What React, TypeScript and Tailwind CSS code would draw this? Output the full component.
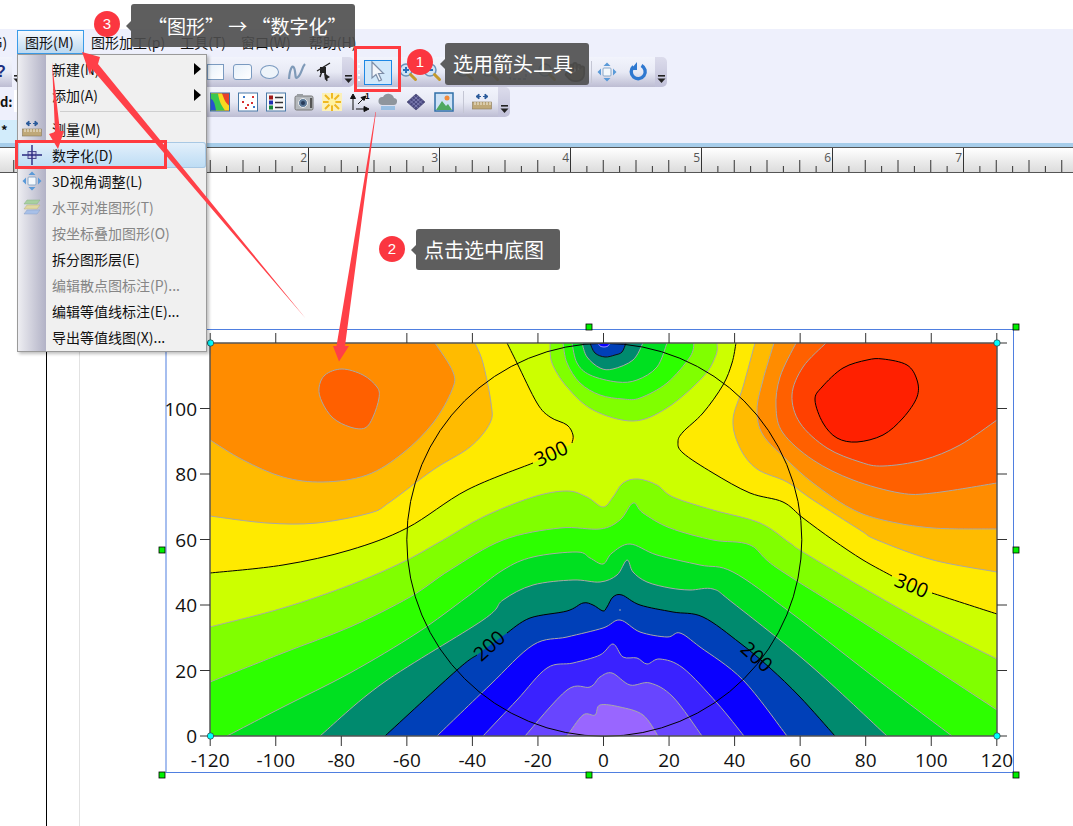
import React from 'react'
import { Hand } from 'lucide-react'

type Pt = [number, number]

interface ILayer {
  color: string
  pts: Pt[]
  close?: Pt[]
  line?: string
  gap?: number
}

// plot corners, page coordinates
const TL: Pt = [210, 343]
const TR: Pt = [997, 343]
const BL: Pt = [210, 736]
const BR: Pt = [997, 736]

const smooth = (pts: Pt[], closed = false) => {
  const at = (i: number) =>
    closed ? pts[(i + pts.length) % pts.length] : pts[Math.max(0, Math.min(pts.length - 1, i))]
  let d = `M${pts[0][0]} ${pts[0][1]}`
  const n = closed ? pts.length : pts.length - 1
  for (let i = 0; i < n; i++) {
    const [p0, p1, p2, p3] = [at(i - 1), at(i), at(i + 1), at(i + 2)]
    const c1 = [p1[0] + (p2[0] - p0[0]) / 6, p1[1] + (p2[1] - p0[1]) / 6]
    const c2 = [p2[0] - (p3[0] - p1[0]) / 6, p2[1] - (p3[1] - p1[1]) / 6]
    d += ` C${c1[0].toFixed(1)} ${c1[1].toFixed(1)} ${c2[0].toFixed(1)} ${c2[1].toFixed(1)} ${p2[0]} ${p2[1]}`
  }
  return closed ? d + ' Z' : d
}

const layers: ILayer[] = [
  // left high
  {
    color: '#ffea00', line: '#000', gap: 5, close: [TL],
    pts: [[210, 573], [283, 565], [350, 550], [407, 528], [467, 490], [533, 463], [572, 443], [573, 435], [567, 425], [550, 417], [537, 403], [517, 363], [507, 343]],
  },
  {
    color: '#ffbb00', close: [TL],
    pts: [[210, 516], [267, 523], [317, 523], [370, 513], [390, 502], [433, 470], [470, 447], [490, 423], [491, 403], [483, 363], [475, 343]],
  },
  {
    color: '#ff8c00', close: [TL],
    pts: [[210, 440], [243, 460], [283, 477], [323, 482], [367, 475], [403, 453], [433, 423], [452, 390], [453, 372], [435, 343]],
  },
  // right high
  {
    color: '#ffea00', line: '#000', gap: 13, close: [TR],
    pts: [[736, 343], [732, 363], [723, 385], [703, 413], [683, 432], [678, 442], [683, 453], [713, 473], [750, 493], [783, 502], [803, 518], [833, 540], [863, 560], [892, 576], [932, 593], [997, 614]],
  },
  {
    color: '#ffbb00', close: [TR],
    pts: [[755, 343], [743, 387], [733, 420], [740, 448], [757, 469], [787, 482], [813, 500], [860, 530], [877, 540], [933, 560], [997, 572]],
  },
  {
    color: '#ff8c00', close: [TR],
    pts: [[774, 343], [763, 380], [757, 410], [763, 435], [787, 460], [813, 483], [850, 508], [883, 520], [933, 528], [997, 529]],
  },
  {
    color: '#ff6000', close: [TR],
    pts: [[796, 343], [780, 377], [776, 407], [783, 433], [813, 460], [853, 480], [900, 493], [933, 493], [997, 483]],
  },
  {
    color: '#ff4000', close: [TR],
    pts: [[826, 343], [803, 367], [792, 395], [800, 423], [827, 448], [860, 462], [883, 466], [923, 460], [960, 445], [997, 420]],
  },
  // top centre low
  {
    color: '#80ff00',
    pts: [[550, 343], [552, 363], [567, 387], [593, 410], [633, 421], [667, 408], [703, 377], [716, 355], [717, 343]],
  },
  {
    color: '#2dff00',
    pts: [[563, 343], [567, 363], [580, 383], [600, 395], [623, 399], [640, 398], [667, 383], [690, 357], [694, 343]],
  },
  {
    color: '#00e020',
    pts: [[572, 343], [577, 363], [590, 375], [617, 382], [637, 380], [657, 367], [667, 343]],
  },
  {
    color: '#008a6e',
    pts: [[582, 343], [587, 357], [600, 368], [613, 369], [633, 360], [643, 343]],
  },
  {
    color: '#0040b8', line: '#111',
    pts: [[590, 343], [595, 353], [605, 357], [615, 355], [622, 352], [626, 343]],
  },
  {
    color: '#0a00ff', line: '#9a90ff',
    pts: [[598, 343], [600, 346], [604, 347], [608, 346], [610, 343]],
  },
  // bottom centre low
  {
    color: '#80ff00', close: [BR, BL],
    pts: [[210, 627], [283, 608], [350, 585], [403, 562], [443, 540], [483, 517], [533, 497], [567, 491], [587, 497], [603, 507], [613, 497], [623, 483], [638, 479], [657, 485], [673, 497], [713, 510], [760, 523], [790, 543], [803, 552], [867, 590], [933, 627], [997, 659]],
  },
  {
    color: '#2dff00', close: [BR, BL],
    pts: [[210, 682], [283, 653], [350, 627], [410, 597], [450, 570], [503, 540], [560, 528], [600, 529], [620, 520], [633, 503], [643, 513], [670, 528], [713, 540], [750, 545], [777, 568], [867, 625], [997, 710]],
  },
  {
    color: '#00e020', close: [BR, BL],
    pts: [[227, 736], [283, 707], [350, 673], [417, 633], [467, 597], [503, 570], [533, 557], [577, 552], [590, 558], [603, 564], [612, 553], [630, 544], [657, 555], [700, 565], [733, 572], [790, 612], [870, 674], [952, 736]],
  },
  {
    color: '#008a6e', close: [BR, BL],
    pts: [[320, 736], [383, 683], [483, 620], [503, 600], [533, 585], [573, 580], [600, 582], [617, 575], [627, 560], [633, 572], [647, 582], [670, 588], [690, 590], [713, 589], [733, 603], [810, 665], [887, 736]],
  },
  {
    color: '#0040b8', line: '#000', gap: 2, close: [BR, BL],
    pts: [[385, 736], [457, 670], [477, 655], [507, 633], [530, 618], [567, 611], [583, 603], [593, 605], [603, 611], [607, 607], [613, 597], [622, 595], [640, 605], [673, 612], [703, 617], [740, 643], [770, 668], [800, 697], [835, 736]],
  },
  {
    color: '#0a00ff', close: [BR, BL],
    pts: [[437, 736], [490, 685], [533, 645], [567, 637], [603, 628], [620, 620], [640, 632], [667, 637], [680, 633], [700, 647], [743, 680], [787, 736]],
  },
  {
    color: '#3a22ff', close: [BR, BL],
    pts: [[483, 736], [517, 700], [547, 668], [573, 663], [600, 655], [613, 644], [623, 657], [637, 658], [647, 664], [660, 659], [683, 668], [717, 703], [744, 736]],
  },
  {
    color: '#6845ff', close: [BR, BL],
    pts: [[525, 736], [567, 690], [590, 687], [600, 677], [612, 673], [630, 685], [650, 683], [673, 697], [702, 736]],
  },
  {
    color: '#9966ff', close: [BR, BL],
    pts: [[567, 736], [583, 715], [595, 715], [600, 705], [620, 707], [643, 715], [658, 736]],
  },
]

const blobLeft: Pt[] = [[342, 369], [363, 375], [377, 387], [379, 398], [373, 417], [365, 428], [350, 427], [333, 418], [322, 402], [319, 388], [325, 375]]
const blobRight: Pt[] = [[883, 359], [907, 365], [917, 380], [917, 397], [903, 418], [883, 435], [857, 442], [837, 438], [823, 423], [815, 400], [822, 387], [843, 368], [867, 360]]

const xTicks = [-120, -100, -80, -60, -40, -20, 0, 20, 40, 60, 80, 100, 120]
const yTicks = [0, 20, 40, 60, 80, 100, 120]
const tickX = (v: number) => 603.5 + (v / 120) * 393.3
const tickY = (v: number) => 736 - (v / 120) * 393

const handles: Pt[] = [[162, 327], [589, 327], [1016, 327], [162, 550], [1016, 550], [162, 775], [589, 775], [1016, 775]]
const anchors: Pt[] = [[210.5, 343], [997, 343], [210.5, 736], [997, 736]]

function Chart() {
  return (
    <svg
      className="absolute left-0 top-0"
      width={1073}
      height={653}
      viewBox="0 173 1073 653"
      fontFamily="'Open Sans', sans-serif"
    >
      <line x1={46.5} y1={173} x2={46.5} y2={826} stroke="#000" />
      <line x1={79.5} y1={173} x2={79.5} y2={826} stroke="#e2e2e2" />
      <rect x={166} y={329.5} width={847.5} height={443} fill="none" stroke="#4f7fe0" />

      <clipPath id="plot">
        <rect x={210} y={343} width={787} height={393} />
      </clipPath>
      <g clipPath="url(#plot)">
        <rect x={210} y={343} width={787} height={393} fill="#ccff00" />
        {layers.map((l, i) => {
          const close = (l.close ?? []).map((c) => `L${c[0]} ${c[1]}`).join(' ')
          const strokes = l.gap ? [l.pts.slice(0, l.gap + 1), l.pts.slice(l.gap + 1)] : [l.pts]
          return (
            <g key={i}>
              <path d={`${smooth(l.pts)} ${close} Z`} fill={l.color} />
              {strokes.map((s, j) => (
                <path key={j} d={smooth(s)} fill="none" stroke={l.line ?? '#a8a8a8'} strokeWidth={1} />
              ))}
            </g>
          )
        })}
        <path d={smooth(blobLeft, true)} fill="#ff6000" stroke="#a8a8a8" />
        <path d={smooth(blobRight, true)} fill="#ff2000" stroke="#000" />
        <circle cx={620} cy={610} r={0.8} fill="#b0b0b0" />
      </g>

      <ellipse cx={604.3} cy={539.8} rx={197.5} ry={196.5} fill="none" stroke="#000" />

      <rect x={210} y={343} width={787} height={393} fill="none" stroke="#555" strokeWidth={1.5} />
      {xTicks.map((v) => (
        <g key={v} stroke="#333">
          <line x1={tickX(v)} y1={333} x2={tickX(v)} y2={343} />
          <line x1={tickX(v)} y1={736} x2={tickX(v)} y2={746} />
        </g>
      ))}
      {yTicks.map((v) => (
        <g key={v} stroke="#333">
          <line x1={200} y1={tickY(v)} x2={210} y2={tickY(v)} />
          <line x1={997} y1={tickY(v)} x2={1007} y2={tickY(v)} />
        </g>
      ))}
      {xTicks.map((v) => (
        <text key={v} x={tickX(v)} y={767} fontSize={19} textAnchor="middle" fill="#111">
          {v}
        </text>
      ))}
      {yTicks.filter((v) => v < 120).map((v) => (
        <text key={v} x={197} y={tickY(v) + 7} fontSize={19} textAnchor="end" fill="#111">
          {v}
        </text>
      ))}

      <g fontSize={20} fill="#000" textAnchor="middle">
        <text transform="translate(554 460) rotate(-25)">300</text>
        <text transform="translate(909 592) rotate(22)">300</text>
        <text transform="translate(494 651) rotate(-42)">200</text>
        <text transform="translate(752 662) rotate(42)">200</text>
      </g>

      {handles.map(([x, y]) => (
        <rect key={`${x}-${y}`} x={x - 3} y={y - 3} width={6} height={6} fill="#00f000" stroke="#000" strokeWidth={0.8} />
      ))}
      {anchors.map(([x, y]) => (
        <circle key={`${x}-${y}`} cx={x} cy={y} r={3.2} fill="#00ffff" stroke="#333" strokeWidth={0.7} />
      ))}
    </svg>
  )
}

function Ruler() {
  const ticks = Array.from({ length: 70 }, (_, i) => i - 3)
  return (
    <div className="h-[26px] shrink-0 border-y border-[#555] bg-linear-to-b from-white to-[#dcdcdc]">
      <svg width={1073} height={24} fontFamily="'Open Sans', sans-serif">
        {ticks.map((i) => {
          const x = 46.5 + i * 16.375
          const h = i % 8 === 0 ? 24 : i % 2 === 0 ? 12 : 6
          return <line key={i} x1={x} y1={24 - h} x2={x} y2={24} stroke="#333" />
        })}
        {[1, 2, 3, 4, 5, 6, 7].map((n) => (
          <text key={n} x={45 + n * 131} y={14} fontSize={12} textAnchor="end" fill="#555">
            {n}
          </text>
        ))}
      </svg>
    </div>
  )
}

const Chevron = () => (
  <svg width={9} height={10} viewBox="0 0 9 10">
    <rect x={1} y={1} width={7} height={1.6} fill="#222" />
    <path d="M0.5 4.5h8L4.5 9z" fill="#222" />
  </svg>
)

const Cap = () => (
  <div className="flex h-full w-[12px] items-end justify-center rounded-r-[5px] bg-linear-to-b from-[#dcdcec] to-[#c0c0d8] pb-[3px]">
    <Chevron />
  </div>
)

const Sep = () => <div className="h-[22px] w-px bg-[#c4c6d4]" />

const Shape = ({ children }: { children: React.ReactNode }) => (
  <svg width={20} height={20} viewBox="0 0 20 20">
    {children}
  </svg>
)

const Magnifier = ({ sign }: { sign?: string }) => (
  <Shape>
    <circle cx={8} cy={8} r={6} fill="#cfe4f6" stroke="#6a93bb" strokeWidth={1.5} />
    {sign && <path d={sign === '+' ? 'M5 8h6M8 5v6' : 'M5 8h6'} stroke="#2a70b8" strokeWidth={2} />}
    <path d="M12.5 12.5l5 5" stroke="#c49a2a" strokeWidth={3} strokeLinecap="round" />
  </Shape>
)

const RulerIcon = () => (
  <Shape>
    <path d="M9 4.5H4M4 4.5l3-2.5v5zM11 4.5h5M16 4.5l-3-2.5v5z" fill="#2a5a9a" stroke="#2a5a9a" />
    <rect x={0.5} y={10} width={19} height={7} fill="#bfa878" stroke="#8a7a58" strokeWidth={0.6} />
    <path d="M3 10v3M6 10v3M9 10v3M12 10v3M15 10v3M18 10v3" stroke="#f4efe0" />
  </Shape>
)

const View3D = () => (
  <Shape>
    <rect x={6} y={6} width={8} height={8} rx={1} fill="#f4f8fc" stroke="#8aa8c8" />
    <path d="M10 0.5l3.5 3.5h-7zM10 19.5l3.5-3.5h-7zM0.5 10l3.5-3.5v7zM19.5 10l-3.5-3.5v7z" fill="#5a9ad8" />
  </Shape>
)

const Cross = () => (
  <Shape>
    <path d="M0 10h20M10 0v20" stroke="#2a2a80" strokeWidth={1.4} />
    <rect x={6} y={6.5} width={8} height={7} fill="#c8c8e8" stroke="#4a4a90" strokeWidth={1} />
    <path d="M6 10h8M10 6.500v7" stroke="#2a2a80" strokeWidth={1.4} />
  </Shape>
)

const Layers = () => (
  <Shape>
    <path d="M5 3h13l-3 4H2z" fill="#a8d0a0" stroke="#8ab088" strokeWidth={0.5} />
    <path d="M5 8h13l-3 4H2z" fill="#e0d8a0" stroke="#b8b088" strokeWidth={0.5} />
    <path d="M5 13h13l-3 4H2z" fill="#a8c0e8" stroke="#88a0c8" strokeWidth={0.5} />
  </Shape>
)

const ContourIcon = () => (
  <Shape>
    <rect x={0.5} y={1} width={19} height={18} fill="#e8402a" stroke="#3a6ea5" />
    <path d="M1 1.500h11c2 5 3 9 7 12V18.500H1z" fill="#f8d820" />
    <path d="M1 1.500h7c1 6 2 10 7 17H1z" fill="#38c850" />
    <path d="M1 7c3 1 4 6 5 11.500H1z" fill="#2850d0" />
  </Shape>
)

const ScatterIcon = () => (
  <Shape>
    <rect x={0.5} y={1} width={19} height={18} fill="#fff" stroke="#4a7aa8" />
    <path d="M4 9h2v2H4zM9 12h2v2H9zM13 10h2v2h-2zM7 15h2v2H7zM14 4h2v2h-2z" fill="#d83030" />
    <path d="M5 4h2v2H5zM15 14h2v2h-2z" fill="#3a78c8" />
  </Shape>
)

const LegendIcon = () => (
  <Shape>
    <rect x={0.5} y={1} width={19} height={18} fill="#f8f8f8" stroke="#4a7aa8" />
    <rect x={3} y={3.5} width={4} height={4} fill="#a01818" />
    <rect x={3} y={8.5} width={4} height={4} fill="#2030b0" />
    <rect x={3} y={13.5} width={4} height={4} fill="#188838" />
    <path d="M9 5.500h8M9 10.500h8M9 15.500h8" stroke="#333" strokeWidth={1.5} />
  </Shape>
)

const CameraIcon = () => (
  <Shape>
    <rect x={1} y={4} width={18} height={14} rx={1.5} fill="#b4b8bc" stroke="#777" />
    <rect x={3} y={2} width={6} height={3} fill="#9a9ea2" />
    <circle cx={9} cy={11} r={4.5} fill="#5a7898" stroke="#eee" />
    <circle cx={9} cy={11} r={2} fill="#263a58" />
    <rect x={16} y={6} width={2} height={10} fill="#555" />
  </Shape>
)

const SunIcon = () => (
  <Shape>
    <rect x={0} y={1} width={20} height={18} fill="#fbf0b8" />
    <path d="M10 1v18M1 10h18M3 3l14 14M17 3L3 17" stroke="#efb820" strokeWidth={2} />
    <circle cx={10} cy={10} r={3.5} fill="#fff2a0" />
  </Shape>
)

const AxisIcon = () => (
  <Shape>
    <path d="M3 18V6M3 2l2.500 4.500h-5zM6 17h9M19 17l-5 2.500v-5zM8 12l5-5M16 4l-5 1.500 3 3z" stroke="#111" fill="#111" strokeWidth={1} />
    <text x={15} y={7} fontSize={8} fontWeight={700} fill="#111">1</text>
  </Shape>
)

const CloudIcon = () => (
  <Shape>
    <path d="M4 13a4 4 0 011-8 6 6 0 0111 1 3.500 3.500 0 01-1 7z" fill="#8f959c" />
    <path d="M3 14h14v4H3z" fill="#8ab8e0" opacity={0.8} />
  </Shape>
)

const DiamondIcon = () => (
  <Shape>
    <path d="M10 2l9 8-9 8-9-8z" fill="#4a4a80" stroke="#33335c" strokeWidth={0.5} />
    <path d="M5.500 6l9 8M7.700 4l9 8M3.300 8l9 8M14.500 6l-9 8M12.300 4l-9 8M16.700 8l-9 8" stroke="#8c8cc0" strokeWidth={0.7} />
  </Shape>
)

const PictureIcon = () => (
  <Shape>
    <rect x={1} y={1} width={18} height={18} fill="#cde2f6" stroke="#2f6fa8" strokeWidth={1.5} />
    <circle cx={13} cy={6} r={2.5} fill="#f08a3c" />
    <path d="M2 18l6-9 4 5 2-2 4 6z" fill="#4ea860" />
  </Shape>
)

const UndoIcon = () => (
  <svg width={20} height={20} viewBox="0 0 20 20">
    <path d="M13.500 3.500a7 7 0 11-8 1" fill="none" stroke="#2e78d0" strokeWidth={3.4} />
    <path d="M9 0v8H2.500z" fill="#2e78d0" />
  </svg>
)

const Cursor = () => (
  <svg width={18} height={22} viewBox="0 0 18 22">
    <path d="M3 1l11.500 11.500H9.500l3 6.500-2.500 1-3-6.500L3 17z" fill="#f4f6fa" stroke="#7d8ea8" strokeWidth={1.2} />
  </svg>
)

const barFill = 'bg-linear-to-b from-[#f2f4fc] via-[#e8eaf5] to-[#bdbdd3]'

function ToolbarOne() {
  return (
    <div className="flex h-[30px] shrink-0">
      <div className={`flex h-full w-[12px] items-center overflow-hidden ${barFill}`}>
        <span className="-ml-[4px] font-['Liberation_Sans',sans-serif] text-[16px] leading-none font-bold text-[#1c2f80]">?</span>
      </div>
      <div className="flex items-end pb-[3px] pl-[1px]">
        <Chevron />
      </div>
      <div className={`ml-[9px] flex h-full w-[311px] items-center justify-end pr-[5px] ${barFill}`}>
        <div className="flex w-[27px] justify-center"><div className="h-[16px] w-[17px] border border-[#7a9ac0] bg-linear-to-br from-[#e6f0fa] to-white" /></div>
        <div className="flex w-[27px] justify-center"><div className="h-[16px] w-[19px] rounded-[3px] border border-[#7a9ac0] bg-linear-to-br from-[#e6f0fa] to-white" /></div>
        <div className="flex w-[27px] justify-center"><div className="h-[14px] w-[19px] rounded-[50%] border border-[#7a9ac0] bg-[#eef4fa]" /></div>
        <div className="flex w-[27px] justify-center">
          <Shape>
            <path d="M2 17C3 5 6 2 7.500 7s0 11 3.500 8 4-10 7-13" fill="none" stroke="#7f9ab8" strokeWidth={2.2} />
          </Shape>
        </div>
        <div className="flex w-[27px] justify-center">
          <Shape>
            <path d="M3 9l13-8M9 6L6 15M10 6l3 13" stroke="#222" strokeWidth={1.4} fill="none" />
            <path d="M6 5h6v6H6zM10 11l6 4-5 3z" fill="#222" />
          </Shape>
        </div>
      </div>
      <Cap />
      <div className={`flex h-full w-[301px] items-center ${barFill}`}>
        <div className="flex h-[18px] w-[10px] flex-col items-center justify-between">
          <i className="size-[2px] bg-white" />
          <i className="size-[2px] bg-white" />
          <i className="size-[2px] bg-white" />
          <i className="size-[2px] bg-white" />
        </div>
        <div className="flex h-[25px] w-[28px] items-center justify-center border border-[#1e88e5] bg-[#d2e8fa]">
          <Cursor />
        </div>
        <div className="ml-[4px] flex w-[24px] justify-center"><Magnifier sign="+" /></div>
        <div className="flex w-[24px] justify-center"><Magnifier sign="-" /></div>
        <div className="ml-[8px] flex w-[26px] justify-center"><Magnifier /></div>
        <div className="flex w-[24px] justify-center"><Magnifier /></div>
        <div className="ml-[2px] flex w-[28px] justify-center">
          <Shape>
            <rect x={2} y={3} width={16} height={14} fill="none" stroke="#3a6ea5" strokeDasharray="3 2" />
          </Shape>
        </div>
        <div className="flex w-[30px] justify-center"><Magnifier /></div>
        <div className="flex w-[26px] justify-center">
          <Hand size={22} color="#3f3a2c" fill="#7d7458" />
        </div>
        <div className="ml-[3px] mr-[5px]"><Sep /></div>
        <div className="flex w-[20px] justify-center"><View3D /></div>
        <div className="ml-[11px] flex w-[20px] justify-center"><UndoIcon /></div>
      </div>
      <Cap />
    </div>
  )
}

function ToolbarTwo() {
  const icons = [
    <ContourIcon key="contour" />, <ScatterIcon key="scatter" />, <LegendIcon key="legend" />,
    <CameraIcon key="camera" />, <SunIcon key="sun" />, <AxisIcon key="axis" />,
    <CloudIcon key="cloud" />, <DiamondIcon key="diamond" />, <PictureIcon key="picture" />,
  ]
  return (
    <div className="flex h-[30px] shrink-0">
      <span className="w-[14px] pt-[5px] text-[13px] font-bold">d:</span>
      <div className="mt-[3px] h-[22px] w-[34px] bg-white" />
      <div className={`flex h-full w-[450px] items-center justify-end ${barFill}`}>
        {icons.map((icon) => (
          <div key={icon.key} className="flex w-[28px] justify-center">{icon}</div>
        ))}
        <div className="ml-[5px] mr-[2px]"><Sep /></div>
        <div className="flex w-[32px] justify-center"><RulerIcon /></div>
      </div>
      <Cap />
    </div>
  )
}

const menuBar = [
  { text: '图形加工(p)', ml: 'ml-[7px]' },
  { text: '工具(T)', ml: 'ml-[15px]' },
  { text: '窗口(W)', ml: 'ml-[15px]' },
  { text: '帮助(H)', ml: 'ml-[18px]' },
]

function MenuBar() {
  return (
    <div className="flex h-[28px] shrink-0 items-center overflow-hidden pb-[2px] text-[14px] text-[#111]">
      <span className="-ml-[12px] w-[29px]">(G)</span>
      <div className="flex h-[24px] w-[67px] items-center border border-[#3a9be8] bg-linear-to-b from-[#f6fafe] to-[#bcd9f0] pl-[7px]">
        图形(M)
      </div>
      {menuBar.map((m) => (
        <span key={m.text} className={`${m.ml} whitespace-nowrap`}>{m.text}</span>
      ))}
    </div>
  )
}

interface IMenuItem {
  text: string
  muted?: boolean
  sub?: boolean
  active?: boolean
  icon?: React.ReactNode
  divider?: boolean
}

const menuItems: IMenuItem[] = [
  { text: '新建(N)', sub: true },
  { text: '添加(A)', sub: true },
  { text: '', divider: true },
  { text: '测量(M)', icon: <RulerIcon /> },
  { text: '数字化(D)', icon: <Cross />, active: true },
  { text: '3D视角调整(L)', icon: <View3D /> },
  { text: '水平对准图形(T)', icon: <Layers />, muted: true },
  { text: '按坐标叠加图形(O)', muted: true },
  { text: '拆分图形层(E)' },
  { text: '编辑散点图标注(P)...', muted: true },
  { text: '编辑等值线标注(E)...' },
  { text: '导出等值线图(X)...' },
]

function DropMenu() {
  return (
    <div className="absolute left-[17px] top-[54px] z-10 h-[298px] w-[190px] border border-[#9a9a9a] bg-[#f0f0f0] pt-px text-[14px] shadow-[2px_2px_3px_rgba(0,0,0,0.25)]">
      <div className="absolute inset-y-0 left-0 w-[28px] bg-linear-to-r from-[#eeeef2] to-[#b2b2c6]" />
      {menuItems.map((item) =>
        item.divider ? (
          <div key="divider" className="relative ml-[42px] mr-[5px] mb-[4px] mt-[3px] h-px bg-[#cfcfcf]" />
        ) : (
          <div
            key={item.text}
            className={`relative flex h-[26px] items-center rounded-[3px] ${
              item.muted ? 'text-[#868686]' : 'text-[#111]'
            } ${
              item.active
                ? 'bg-linear-to-b from-[#e4f0fb] to-[#bcdcf4] shadow-[inset_0_0_0_1px_#a8c8e4]'
                : ''
            }`}
          >
            <span className="flex w-[28px] justify-center">{item.icon}</span>
            <span className="ml-[6px] whitespace-nowrap">{item.text}</span>
            {item.sub && <span className="ml-auto mr-[5px] h-0 w-0 border-y-[6px] border-l-[7px] border-y-transparent border-l-black" />}
          </div>
        ),
      )}
    </div>
  )
}

function Tip({ className, text, num, numClass }: { className: string; text: string; num: number; numClass: string }) {
  return (
    <>
      <div className={`absolute z-30 flex items-center rounded-[3px] bg-[#4c4c4c]/90 leading-none whitespace-nowrap text-white ${className}`}>
        <span className="absolute -left-[5px] top-1/2 -mt-[5px] h-0 w-0 border-y-[5px] border-r-[5px] border-y-transparent border-r-[#4c4c4c]/90" />
        {text}
      </div>
      <div className={`absolute z-30 flex size-[26px] items-center justify-center rounded-full bg-[#fb3640] font-['Liberation_Sans',sans-serif] text-[15px] text-white ${numClass}`}>
        {num}
      </div>
    </>
  )
}

function Annotations() {
  return (
    <>
      <svg className="absolute left-0 top-0 z-20" width={1073} height={826} viewBox="0 0 1073 826">
        <g fill="#ff4048">
          <path d="M375.500 112L376 112 345 346H349L339 361.500 333 346H336.500z" />
          <path d="M82 52L100 57 98 64 305.700 318.500 92 69 90 75z" />
          <path d="M52 62L60 131 64 131 58 149 49 134 55 132z" />
        </g>
      </svg>
      <div className="absolute left-[354px] top-[46px] z-20 h-[46px] w-[47px] border-[3px] border-[#ff3b40]" />
      <div className="absolute left-[15px] top-[140px] z-20 h-[29px] w-[152px] border-[3px] border-[#ff3b40]" />
      <Tip className="left-[131px] top-[4px] h-[43px] w-[224px] pl-[17px] text-[19px]" text="“图形” → “数字化”" num={3} numClass="left-[94px] top-[11px]" />
      <Tip className="left-[445px] top-[43px] h-[42px] w-[144px] pl-[8px] text-[20px]" text="选用箭头工具" num={1} numClass="left-[407px] top-[49px]" />
      <Tip className="left-[416px] top-[229px] h-[41px] w-[144px] pl-[8px] text-[20px]" text="点击选中底图" num={2} numClass="left-[379px] top-[236px]" />
    </>
  )
}

export default function App() {
  return (
    <div className="relative flex h-screen w-[1073px] flex-col overflow-hidden bg-white font-['Noto_Sans_CJK_SC',sans-serif] text-[#111]">
      <div className="h-[29px] shrink-0" />
      <div className="flex h-[118px] shrink-0 flex-col bg-[#eef0fc]">
        <MenuBar />
        <ToolbarOne />
        <ToolbarTwo />
        <div className="mt-[3px] flex h-[23px] w-[17px] items-start bg-[#d2ecfb] pl-[1px] text-[13px] font-bold">*</div>
        <div className="h-[4px] shrink-0 bg-[#a6cdea]" />
      </div>
      <Ruler />
      <div className="relative flex-1">
        <Chart />
      </div>
      <DropMenu />
      <Annotations />
    </div>
  )
}
